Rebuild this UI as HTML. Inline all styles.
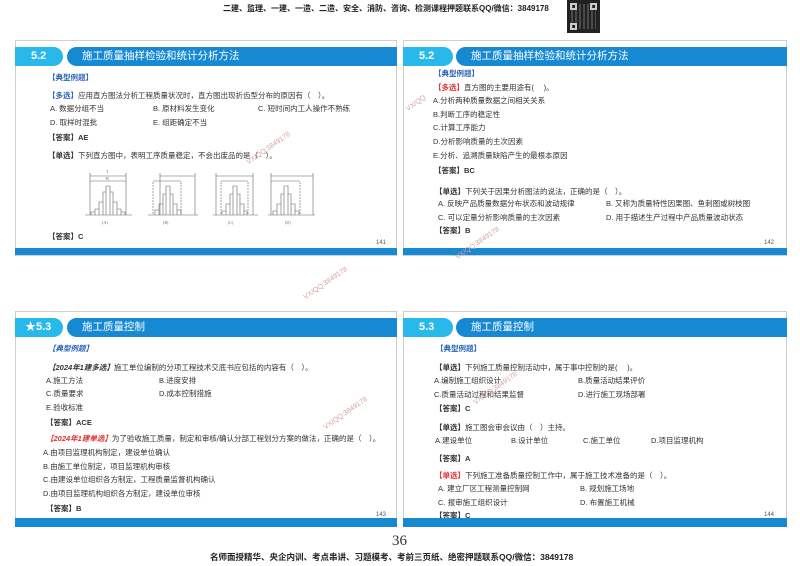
<!DOCTYPE html>
<html><head><meta charset="utf-8"><style>
*{margin:0;padding:0;box-sizing:border-box}
body{width:800px;height:566px;background:#fff;position:relative;overflow:hidden;font-family:"Liberation Sans","Noto Sans CJK SC",sans-serif;color:#333}
.slide{position:absolute;background:#fff;border:1px solid #cfcfcf}
.badge{position:absolute;background:#29b8ea;color:#fff;font-weight:bold;font-size:11px;line-height:19px;padding-left:16px;border-radius:0 10px 10px 0}
.bar{position:absolute;background:#1689d2;color:#fff;font-size:10.5px;line-height:19px;padding-left:15px;border-radius:10px 0 0 10px}
.foot{position:absolute;background:#1689d2;height:7px}
.t{position:absolute;font-size:7.5px;white-space:nowrap;line-height:9px}
.b{font-weight:bold}
.bl{color:#2a63b8;font-weight:bold}
.rd{color:#e03030;font-weight:bold}
.pn{position:absolute;font-size:6px;color:#555}
.wm{position:absolute;font-size:7px;color:#d9a0a0;transform:rotate(-35deg);white-space:nowrap}
</style></head><body>
<div class="t b" style="left:223px;top:4px;font-size:8px;color:#222">二建、监理、一建、一造、二造、安全、消防、咨询、检测课程押题联系QQ/微信：3849178</div>
<div style="position:absolute;left:567px;top:0;width:33px;height:33px;background:#222"><div style="position:absolute;left:4px;top:4px;width:25px;height:25px;background:repeating-linear-gradient(90deg,#555 0 2px,#222 2px 4px),#333;opacity:.8"></div><div style="position:absolute;left:3px;top:3px;width:7px;height:7px;border:2px solid #ccc"></div><div style="position:absolute;right:3px;top:3px;width:7px;height:7px;border:2px solid #ccc"></div><div style="position:absolute;left:3px;bottom:3px;width:7px;height:7px;border:2px solid #ccc"></div></div>

<!-- slide 141 -->
<div class="slide" style="left:15px;top:40px;width:382px;height:216px"></div>
<div class="badge" style="left:15px;top:47px;width:48px">5.2</div>
<div class="bar" style="left:67px;top:47px;width:330px">施工质量抽样检验和统计分析方法</div>
<div class="t bl" style="left:48px;top:73px">【典型例题】</div>
<div class="t" style="left:48px;top:91px"><span class="bl">【多选】</span>应用直方图法分析工程质量状况时，直方图出现折齿型分布的原因有（　）。</div>
<div class="t" style="left:50px;top:104px">A. 数据分组不当</div>
<div class="t" style="left:153px;top:104px">B. 原材料发生变化</div>
<div class="t" style="left:258px;top:104px">C. 短时间内工人操作不熟练</div>
<div class="t" style="left:50px;top:118px">D. 取样时混批</div>
<div class="t" style="left:153px;top:118px">E. 组距确定不当</div>
<div class="t b" style="left:48px;top:133px">【答案】AE</div>
<div class="t" style="left:48px;top:151px"><span class="b">【单选】</span>下列直方图中，表明工序质量稳定，不会出废品的是（　）。</div>
<svg style="position:absolute;left:85px;top:168px" width="235" height="60" viewBox="0 0 235 60" fill="none" stroke="#666" stroke-width="0.6">
<g><line x1="0" y1="47" x2="47" y2="47"/><line x1="5" y1="5" x2="5" y2="47"/><line x1="41" y1="5" x2="41" y2="47"/><line x1="5" y1="8" x2="41" y2="8"/><line x1="5" y1="13" x2="41" y2="13"/><path d="M6 47V44H10V41H14V34H18V24H21V18H25V24H28V34H32V41H36V44H40V47M10 47V44M14 47V41M18 47V34M21 47V24M25 47V24M28 47V34M32 47V41M36 47V44"/></g>
<g transform="translate(63,0)"><line x1="0" y1="47" x2="50" y2="47"/><line x1="5" y1="14" x2="5" y2="47" stroke-dasharray="2 1"/><line x1="47" y1="5" x2="47" y2="47"/><line x1="12" y1="8" x2="47" y2="8"/><line x1="5" y1="13" x2="33" y2="13"/><line x1="33" y1="14" x2="33" y2="47" stroke-dasharray="2 1"/><line x1="12" y1="5" x2="12" y2="47"/><path d="M7 47V42H11V36H15V26H18V18H22V26H25V36H29V42H33V47M11 47V42M15 47V36M18 47V26M22 47V26M25 47V36M29 47V42"/></g>
<g transform="translate(128,0)"><line x1="0" y1="47" x2="45" y2="47"/><line x1="3" y1="5" x2="3" y2="47"/><line x1="40" y1="5" x2="40" y2="47"/><line x1="3" y1="8" x2="40" y2="8"/><line x1="8" y1="13" x2="35" y2="13"/><line x1="8" y1="14" x2="8" y2="47" stroke-dasharray="2 1"/><line x1="35" y1="14" x2="35" y2="47" stroke-dasharray="2 1"/><path d="M9 47V43H13V36H17V26H20V18H24V26H27V36H31V43H34V47M13 47V43M17 47V36M20 47V26M24 47V26M27 47V36M31 47V43"/></g>
<g transform="translate(183,0)"><line x1="0" y1="47" x2="47" y2="47"/><line x1="3" y1="5" x2="3" y2="47"/><line x1="45" y1="5" x2="45" y2="47"/><line x1="3" y1="8" x2="45" y2="8"/><line x1="3" y1="13" x2="32" y2="13"/><line x1="32" y1="14" x2="32" y2="47" stroke-dasharray="2 1"/><path d="M5 47V43H9V36H13V26H16V18H20V26H23V36H27V43H31V47M9 47V43M13 47V36M16 47V26M20 47V26M23 47V36M27 47V43"/></g>
<g fill="#666" stroke="none" font-size="4" font-family="Liberation Serif"><text x="17" y="56">(A)</text><text x="78" y="56">(B)</text><text x="143" y="56">(C)</text><text x="200" y="56">(D)</text><text x="21" y="5">T</text><text x="21" y="12">B</text></g>
</svg>
<div class="t b" style="left:48px;top:232px">【答案】C</div>
<div class="pn" style="left:376px;top:240px">141</div>
<div class="foot" style="left:15px;top:248px;width:382px"></div>
<div class="wm" style="left:243px;top:145px">VX/QQ:3849178</div>

<!-- slide 142 -->
<div class="slide" style="left:403px;top:40px;width:384px;height:216px"></div>
<div class="badge" style="left:403px;top:47px;width:50px">5.2</div>
<div class="bar" style="left:456px;top:47px;width:331px">施工质量抽样检验和统计分析方法</div>
<div class="t bl" style="left:434px;top:69px">【典型例题】</div>
<div class="t" style="left:434px;top:83px"><span class="rd">【多选】</span>直方图的主要用途有(　 )。</div>
<div class="t" style="left:433px;top:96px">A.分析两种质量数据之间相关关系</div>
<div class="t" style="left:433px;top:110px">B.判断工序的稳定性</div>
<div class="t" style="left:433px;top:123px">C.计算工序能力</div>
<div class="t" style="left:433px;top:137px">D.分析影响质量的主次因素</div>
<div class="t" style="left:433px;top:151px">E.分析、追溯质量缺陷产生的最根本原因</div>
<div class="t b" style="left:434px;top:166px">【答案】BC</div>
<div class="t" style="left:435px;top:187px"><span class="b">【单选】</span>下列关于因果分析图法的说法，正确的是（　）。</div>
<div class="t" style="left:438px;top:199px">A. 反映产品质量数据分布状态和波动规律</div>
<div class="t" style="left:606px;top:199px">B. 又称为质量特性因果图、鱼刺图或树枝图</div>
<div class="t" style="left:438px;top:213px">C. 可以定量分析影响质量的主次因素</div>
<div class="t" style="left:606px;top:213px">D. 用于描述生产过程中产品质量波动状态</div>
<div class="t b" style="left:435px;top:226px">【答案】B</div>
<div class="pn" style="left:764px;top:240px">142</div>
<div class="foot" style="left:403px;top:248px;width:384px"></div>
<div class="wm" style="left:452px;top:240px">VX/QQ:3849178</div>
<div class="wm" style="left:405px;top:100px">VX/QQ</div>

<!-- slide 143 -->
<div class="slide" style="left:15px;top:311px;width:382px;height:216px"></div>
<div class="badge" style="left:15px;top:318px;width:48px;padding-left:10px">★5.3</div>
<div class="bar" style="left:67px;top:318px;width:330px">施工质量控制</div>
<div class="t bl" style="left:48px;top:344px;font-style:italic">【典型例题】</div>
<div class="t" style="left:48px;top:363px"><span class="b" style="font-style:italic">【2024年1建多选】</span>施工单位编制的分项工程技术交底书应包括的内容有（　）。</div>
<div class="t" style="left:46px;top:376px">A.施工方法</div>
<div class="t" style="left:159px;top:376px">B.进度安排</div>
<div class="t" style="left:46px;top:389px">C.质量要求</div>
<div class="t" style="left:159px;top:389px">D.成本控制措施</div>
<div class="t" style="left:46px;top:403px">E.验收标准</div>
<div class="t b" style="left:46px;top:418px">【答案】ACE</div>
<div class="t" style="left:46px;top:434px"><span class="rd" style="font-style:italic">【2024年1建单选】</span>为了验收施工质量，制定和审核/确认分部工程划分方案的做法，正确的是（　）。</div>
<div class="t" style="left:43px;top:448px">A.由项目监理机构制定，建设单位确认</div>
<div class="t" style="left:43px;top:462px">B.由施工单位制定，项目监理机构审核</div>
<div class="t" style="left:43px;top:475px">C.由建设单位组织各方制定，工程质量监督机构确认</div>
<div class="t" style="left:43px;top:489px">D.由项目监理机构组织各方制定，建设单位审核</div>
<div class="t b" style="left:46px;top:504px">【答案】B</div>
<div class="pn" style="left:376px;top:512px">143</div>
<div class="foot" style="left:15px;top:518px;width:382px;height:9px"></div>
<div class="wm" style="left:320px;top:410px">VX/QQ:3849178</div>
<div class="wm" style="left:300px;top:280px">VX/QQ:3849178</div>

<!-- slide 144 -->
<div class="slide" style="left:403px;top:311px;width:384px;height:216px"></div>
<div class="badge" style="left:403px;top:318px;width:50px">5.3</div>
<div class="bar" style="left:456px;top:318px;width:331px">施工质量控制</div>
<div class="t bl" style="left:436px;top:344px">【典型例题】</div>
<div class="t" style="left:435px;top:363px"><span class="b">【单选】</span>下列施工质量控制活动中，属于事中控制的是(　 )。</div>
<div class="t" style="left:434px;top:376px">A.编制施工组织设计</div>
<div class="t" style="left:578px;top:376px">B.质量活动结果评价</div>
<div class="t" style="left:434px;top:390px">C.质量活动过程和结果监督</div>
<div class="t" style="left:578px;top:390px">D.进行施工现场部署</div>
<div class="t b" style="left:435px;top:404px">【答案】C</div>
<div class="t" style="left:435px;top:423px"><span class="b">【单选】</span>施工图会审会议由（　）主持。</div>
<div class="t" style="left:435px;top:436px">A.建设单位</div>
<div class="t" style="left:511px;top:436px">B.设计单位</div>
<div class="t" style="left:583px;top:436px">C.施工单位</div>
<div class="t" style="left:651px;top:436px">D.项目监理机构</div>
<div class="t b" style="left:435px;top:454px">【答案】A</div>
<div class="t" style="left:435px;top:471px"><span class="rd">【单选】</span>下列施工准备质量控制工作中，属于施工技术准备的是（　）。</div>
<div class="t" style="left:438px;top:484px">A. 建立厂区工程测量控制网</div>
<div class="t" style="left:580px;top:484px">B. 规划施工场地</div>
<div class="t" style="left:438px;top:498px">C. 报审施工组织设计</div>
<div class="t" style="left:580px;top:498px">D. 布置施工机械</div>
<div class="t b" style="left:435px;top:511px">【答案】C</div>
<div class="pn" style="left:764px;top:512px">144</div>
<div class="foot" style="left:403px;top:518px;width:384px;height:9px"></div>
<div class="wm" style="left:470px;top:385px">VX/QQ:3849178</div>

<div style="position:absolute;left:392px;top:533px;font-family:'Liberation Serif',serif;font-size:15px;color:#333">36</div>
<div class="t b" style="left:210px;top:553px;font-size:8.5px;color:#222">名师面授精华、央企内训、考点串讲、习题模考、考前三页纸、绝密押题联系QQ/微信：3849178</div>
</body></html>
